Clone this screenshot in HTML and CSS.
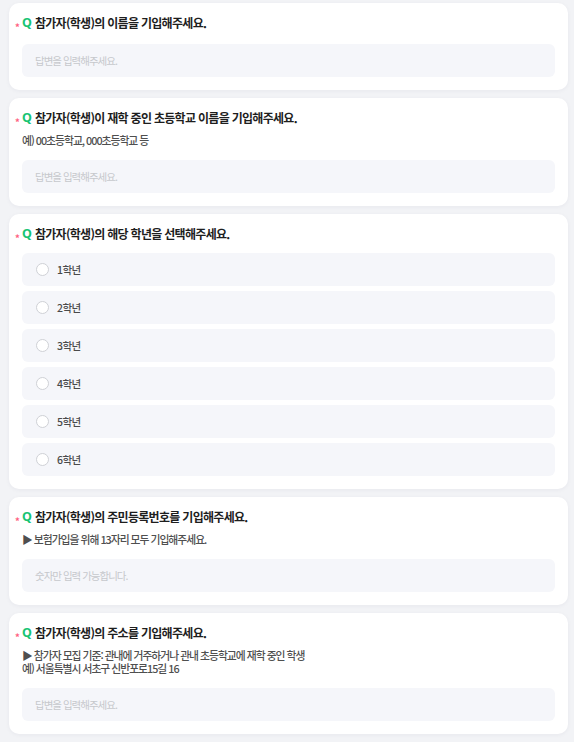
FILE: index.html
```html
<!DOCTYPE html>
<html lang="ko">
<head>
<meta charset="utf-8">
<link rel="stylesheet" href="styles.css">
</head>
<body>
<div class="page">
  <section class="card">
    <h2 class="q-title"><span class="req">*</span><span class="q">Q</span>참가자(학생)의 이름을 기입해주세요.</h2>
    <div class="input">답변을 입력해주세요.</div>
  </section>

  <section class="card">
    <h2 class="q-title"><span class="req">*</span><span class="q">Q</span>참가자(학생)이 재학 중인 초등학교 이름을 기입해주세요.</h2>
    <div class="desc"><div class="desc-line">예) 00초등학교, 000초등학교 등</div></div>
    <div class="input">답변을 입력해주세요.</div>
  </section>

  <section class="card">
    <h2 class="q-title"><span class="req">*</span><span class="q">Q</span>참가자(학생)의 해당 학년을 선택해주세요.</h2>
    <ul class="options">
      <li class="option"><span class="radio"></span>1학년</li>
      <li class="option"><span class="radio"></span>2학년</li>
      <li class="option"><span class="radio"></span>3학년</li>
      <li class="option"><span class="radio"></span>4학년</li>
      <li class="option"><span class="radio"></span>5학년</li>
      <li class="option"><span class="radio"></span>6학년</li>
    </ul>
  </section>

  <section class="card">
    <h2 class="q-title"><span class="req">*</span><span class="q">Q</span>참가자(학생)의 주민등록번호를 기입해주세요.</h2>
    <div class="desc"><div class="desc-line">▶ 보험가입을 위해 13자리 모두 기입해주세요.</div></div>
    <div class="input">숫자만 입력 가능합니다.</div>
  </section>

  <section class="card">
    <h2 class="q-title"><span class="req">*</span><span class="q">Q</span>참가자(학생)의 주소를 기입해주세요.</h2>
    <div class="desc">
      <div class="desc-line">▶ 참가자 모집 기준: 관내에 거주하거나 관내 초등학교에 재학 중인 학생</div>
      <div class="desc-line">예) 서울특별시 서초구 신반포로15길 16</div>
    </div>
    <div class="input">답변을 입력해주세요.</div>
  </section>
</div>
</body>
</html>
```

FILE: styles.css
```css
html, body {
  margin: 0;
  padding: 0;
  background: #f2f3f6;
}
body {
  font-family: "Noto Sans CJK KR", "Noto Sans", sans-serif;
  color: #222;
}
.page {
  display: flex;
  flex-direction: column;
  gap: 8px;
  padding: 3px 6px 8px 9px;
}
.card {
  background: #fff;
  border-radius: 10px;
  box-shadow: 0 1px 4px rgba(30, 40, 70, 0.05);
  padding: 10px 13px 13px 13px;
}
.q-title {
  margin: 0;
  height: 20px;
  font-size: 12px;
  font-weight: 700;
  line-height: 20px;
  letter-spacing: -0.7px;
  color: #1e1e1e;
  display: flex;
  align-items: center;
}
.req {
  color: #ff5f82;
  font-size: 9.5px;
  line-height: 20px;
  height: 20px;
  width: 7px;
  margin-left: -7px;
  padding-top: 4px;
  box-sizing: border-box;
}
.q {
  color: #18c474;
  font-family: "Noto Sans", sans-serif;
  font-weight: 700;
  font-size: 12.5px;
  margin-right: 3px;
  letter-spacing: 0;
}
.desc {
  margin-top: 6px;
  font-size: 10.8px;
  letter-spacing: -1px;
  color: #4f4f4f;
  font-weight: 500;
}
.desc-line {
  height: 13px;
  line-height: 13px;
  white-space: nowrap;
}
.desc + .input {
  margin-top: 13px;
}
.input {
  margin-top: 11px;
  height: 33px;
  border-radius: 6px;
  background: #f5f6fa;
  color: #c6c8cc;
  font-size: 10.5px;
  letter-spacing: -1px;
  display: flex;
  align-items: center;
  padding-left: 13px;
}
.options {
  list-style: none;
  margin: 9px 0 0 0;
  padding: 0;
  display: flex;
  flex-direction: column;
  gap: 5px;
}
.option {
  height: 33px;
  border-radius: 6px;
  background: #f5f6fa;
  display: flex;
  align-items: center;
  padding-left: 14px;
  font-size: 10.5px;
  letter-spacing: -0.6px;
  font-weight: 500;
  color: #4a4a4a;
}
.radio {
  width: 11px;
  height: 11px;
  border: 1px solid #cfd1d6;
  border-radius: 50%;
  background: #fff;
  margin-right: 8px;
}
```
